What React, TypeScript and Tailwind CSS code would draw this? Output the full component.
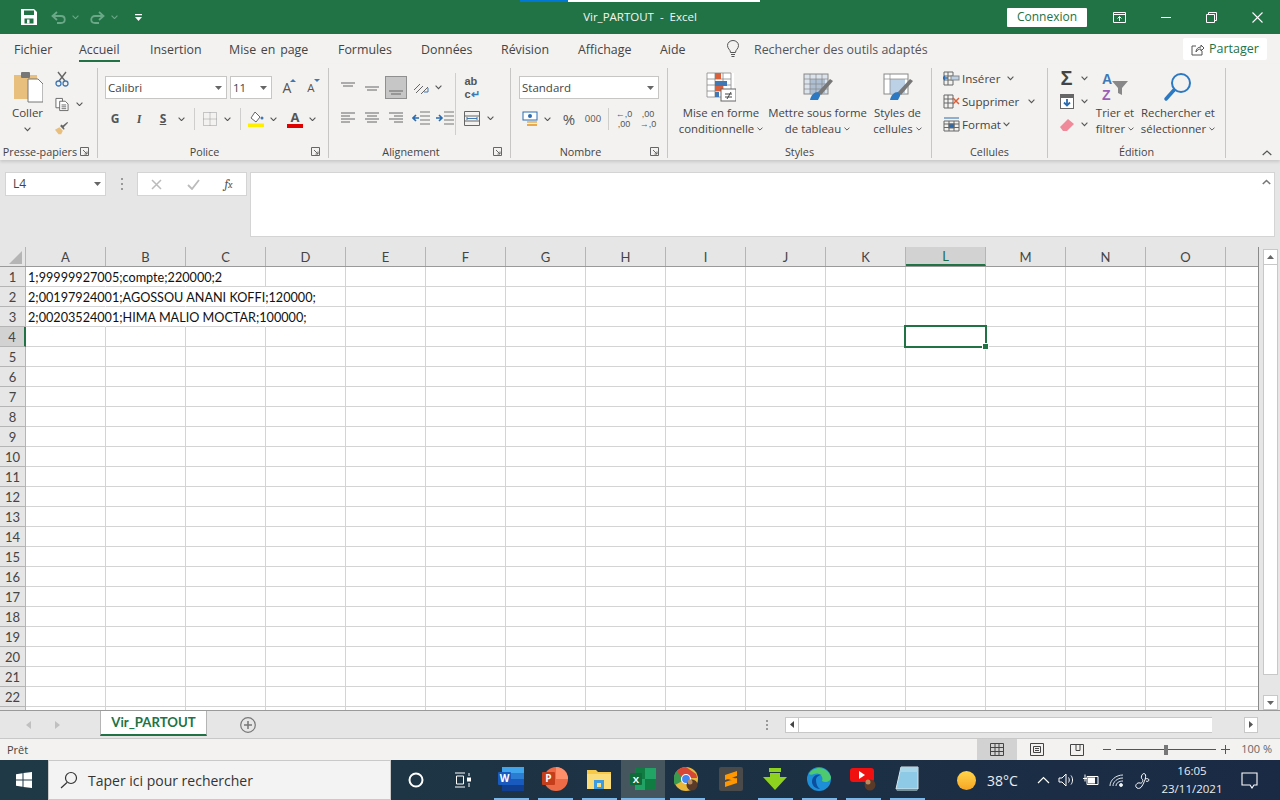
import React from "react";

const Chev = ({ c = "#555", w = 7 }: { c?: string; w?: number }) => (
  <svg width={w} height={w * 0.65} viewBox="0 0 7 4.5" fill="none"><path d="M.6.7 3.5 3.6 6.4.7" stroke={c} strokeWidth="1.1" /></svg>
);
const Caret = () => <svg width="7" height="4" viewBox="0 0 7 4"><path d="M0 0h7L3.5 4z" fill="#666" /></svg>;
const S = ({ w, children, className = "" }: { w: number; children?: React.ReactNode; className?: string }) => (
  <div style={{ width: w }} className={`flex shrink-0 items-center justify-center ${className}`}>{children}</div>
);
const Launcher = () => (
  <svg width="9" height="9" viewBox="0 0 9 9" fill="none" stroke="#666"><path d="M.5 8.5v-8h8v8z" /><path d="M3 3l4 4M7 4.5V7H4.5" /></svg>
);
const VSep = ({ h = 22 }: { h?: number }) => <div style={{ height: h }} className="w-px bg-[#d0cecc]" />;

function Group({ w, label, launcher, children }: { w: number; label: string; launcher?: boolean; children: React.ReactNode }) {
  return (
    <div style={{ width: w }} className="flex h-[90px] shrink-0 flex-col border-r border-[#c8c6c4]">
      <div className="h-[77px] shrink-0">{children}</div>
      <div className="flex h-[13px] shrink-0 items-center text-[10.8px] leading-[13px] text-[#444]">
        <div className="flex-1 text-center whitespace-nowrap">{label}</div>
        {launcher && <div className="flex w-[17px] items-center"><Launcher /></div>}
      </div>
    </div>
  );
}

const Combo = ({ w, text }: { w: number; text: string }) => (
  <div style={{ width: w }} className="flex h-[23px] items-center justify-between border border-[#c8c6c4] bg-white pr-[4px] pl-[2px] text-[11.5px] text-[#444]">
    <span>{text}</span><Caret />
  </div>
);

const Lines = ({ kind }: { kind: "t" | "m" | "b" | "l" | "c" | "r" }) => {
  const v: Record<string, string> = {
    t: "M1 3h14M3 6h10",
    m: "M1 7h14M3 10h10",
    b: "M1 11h14M3 14h10",
    l: "M1 3h14M1 6h9M1 9h14M1 12h9",
    c: "M1 3h14M3 6h10M1 9h14M3 12h10",
    r: "M1 3h14M6 6h9M1 9h14M6 12h9",
  };
  return <svg width="16" height="16" viewBox="0 0 16 16" fill="none" stroke="#666"><path d={v[kind]} /></svg>;
};
const Indent = ({ right }: { right?: boolean }) => (
  <svg width="18" height="14" viewBox="0 0 18 14" fill="none">
    <path d="M8 1h10M8 5h10M8 9h10M8 13h10" stroke="#777" />
    {right ? <path d="M0 7h5M3 4l3 3-3 3" stroke="#2b6cb0" strokeWidth="1.6" /> : <path d="M7 7H2M4 4 1 7l3 3" stroke="#2b6cb0" strokeWidth="1.6" />}
  </svg>
);

function Tabs() {
  const tabs: [string, number][] = [["Fichier", 65], ["Accueil", 71], ["Insertion", 79], ["Mise en page", 109], ["Formules", 83], ["Données", 80], ["Révision", 77], ["Affichage", 82], ["Aide", 64]];
  return (
    <div className="flex h-[30px] shrink-0 items-center bg-[#f3f2f1] pl-[14px] text-[12.4px] text-[#444] [word-spacing:1.5px]">
      {tabs.map(([t, w]) => (
        <div key={t} style={{ width: w }} className="flex h-full shrink-0 items-center whitespace-nowrap">
          <span className="relative flex h-full items-center pt-[2px]">
            {t}
            {t === "Accueil" && <span className="absolute right-0 bottom-[2px] left-0 h-[2px] bg-[#217346]" />}
          </span>
        </div>
      ))}
      <S w={18}>
        <svg width="14" height="18" viewBox="0 0 14 18" fill="none" stroke="#555"><path d="M4.5 12.5C4.5 9.5 1.5 9 1.5 5.5a5.5 5 0 0 1 11 0c0 3.500-3 4-3 7zM5 14.500h4M5.500 16.500h3" /></svg>
      </S>
      <div className="ml-[12px] pt-[2px] whitespace-nowrap text-[#555] [word-spacing:0]">Rechercher des outils adaptés</div>
      <div className="mr-[13px] ml-auto flex h-[22px] w-[84px] items-center justify-center gap-[5px] rounded-[2px] bg-white pt-[1px] text-[12.5px] font-medium text-[#217346]">
        <svg width="13" height="13" viewBox="0 0 13 13" fill="none" stroke="#555"><path d="M5 3H1v9h10V8M5 9c0-3 2-5 5-5V2l3 3-3 3V6c-2 0-4 1-5 3z" /></svg>
        Partager
      </div>
    </div>
  );
}

const PasteIcon = () => (
  <svg width="30" height="32" viewBox="0 0 30 32">
    <rect x="1" y="4" width="23" height="24" fill="#e8bf7c" />
    <rect x="8" y="1" width="9" height="6" rx="1" fill="#777" />
    <path d="M15 11h10l5 5v18H15z" transform="translate(0 -3)" fill="#fff" stroke="#777" />
  </svg>
);

const Clipboard = () => (
  <div className="flex h-full">
    <div className="flex w-[55px] flex-col items-center pt-[3px] text-[11.5px] text-[#444]">
      <PasteIcon />
      <div className="mt-[2px] h-[16px] leading-[16px]">Coller</div>
      <div className="mt-[6px]"><Chev /></div>
    </div>
    <div className="flex flex-col pt-[1px]">
      <S w={14} className="h-[20px]">
        <svg width="14" height="16" viewBox="0 0 14 16" fill="none"><path d="M3 1l7 9M11 1 4 10" stroke="#666" strokeWidth="1.4" /><circle cx="3.500" cy="12.500" r="2.500" stroke="#3f78b5" strokeWidth="1.300" /><circle cx="10.500" cy="12.500" r="2.500" stroke="#3f78b5" strokeWidth="1.300" /></svg>
      </S>
      <div className="mt-[4px] flex h-[22px] items-center">
        <S w={14}>
          <svg width="15" height="15" viewBox="0 0 15 15" fill="#fff" stroke="#666"><path d="M1 1h7v10H1z" /><path d="M5 4h6l3 3v7H5z" /><path d="M7 8h5M7 10h5M7 12h5" /></svg>
        </S>
        <S w={20}><Chev /></S>
      </div>
      <S w={14} className="mt-[2px] h-[22px]">
        <svg width="16" height="14" viewBox="0 0 16 14"><path d="M0 9l5-3 4 4-2 4H4z" fill="#e8bf7c" /><path d="M6 5l4 4 1-1-1-2 5-5-1-1-5 4-2-1z" fill="#666" /></svg>
      </S>
    </div>
  </div>
);

const Police = () => (
  <div className="flex h-full flex-col pt-[8px]">
    <div className="flex h-[23px] items-center pl-[7px]">
      <Combo w={122} text="Calibri" />
      <div className="ml-[3px]"><Combo w={42} text="11" /></div>
      <S w={3} />
      <S w={24}>
        <span className="relative text-[14px] leading-none text-[#555]">A<span className="absolute -top-[2px] -right-[5px] h-0 w-0 border-x-[3px] border-b-[3px] border-x-transparent border-b-[#3f78b5]" /></span>
      </S>
      <S w={24}>
        <span className="relative text-[11.5px] leading-none text-[#555]">A<span className="absolute -top-[3px] -right-[5px] h-0 w-0 border-x-[3px] border-t-[3px] border-x-transparent border-t-[#3f78b5]" /></span>
      </S>
    </div>
    <div className="mt-[9px] flex h-[22px] items-center pl-[5px] text-[12px] font-bold text-[#555]">
      <S w={24}>G</S>
      <S w={24}><span className="font-serif italic">I</span></S>
      <S w={24}><span className="underline">S</span></S>
      <S w={12}><Chev /></S>
      <S w={14}><VSep /></S>
      <S w={17}>
        <svg width="14" height="14" viewBox="0 0 14 14" fill="none" stroke="#999" strokeDasharray="1 1"><path d="M.5.5h13v13H.500zM.5 7h13M7 .5v13" /></svg>
      </S>
      <S w={18}><Chev /></S>
      <S w={8}><VSep /></S>
      <S w={24}>
        <svg width="16" height="16" viewBox="0 0 16 16"><path d="M7 1l5 5-4 5-5-4z" fill="#fff" stroke="#666" /><circle cx="14" cy="7" r="1.500" fill="#3f78b5" /><rect y="12.500" width="16" height="3.500" fill="#ffee00" /></svg>
      </S>
      <S w={10}><Chev /></S>
      <S w={4} />
      <S w={26}>
        <span className="relative flex h-[18px] w-[16px] flex-col items-center text-[13px] leading-[14px] text-[#555]">A<span className="h-[4px] w-[16px] bg-[#e00000]" /></span>
      </S>
      <S w={8}><Chev /></S>
    </div>
  </div>
);

const Alignment = () => (
  <div className="flex h-full pt-[8px]">
    <div className="flex w-[126px] flex-col pl-[7px]">
      <div className="flex h-[23px] items-center">
        <S w={24}><Lines kind="t" /></S>
        <S w={24}><Lines kind="m" /></S>
        <S w={22} className="ml-[1px] h-[23px] border border-[#8f8f8f] bg-[#c6c6c6]"><Lines kind="b" /></S>
        <S w={24} className="ml-[2px]">
          <svg width="18" height="14" viewBox="0 0 18 14" fill="none" stroke="#666"><path d="M2 9l6-6M4 12l7-7M9 13 16 6" /><path d="M12 11h4V7" stroke="#3f78b5" /></svg>
        </S>
        <S w={10}><Chev /></S>
      </div>
      <div className="mt-[8px] flex h-[22px] items-center">
        <S w={24}><Lines kind="l" /></S>
        <S w={24}><Lines kind="c" /></S>
        <S w={24}><Lines kind="r" /></S>
        <S w={25}><Indent /></S>
        <S w={24}><Indent right /></S>
      </div>
    </div>
    <div className="flex flex-col">
      <div className="-mt-[3px] h-[62px] w-px bg-[#d0cecc]" />
    </div>
    <div className="flex flex-col pl-[4px]">
      <div className="flex h-[23px] items-center">
        <S w={24}>
          <span className="flex flex-col items-start font-['Liberation_Sans'] text-[11px] leading-[13px] font-bold text-[#555]">
            <span>ab</span>
            <span>c<span className="text-[#3f78b5]">↵</span></span>
          </span>
        </S>
      </div>
      <div className="mt-[8px] flex h-[22px] items-center">
        <S w={24}>
          <svg width="16" height="15" viewBox="0 0 16 15" fill="none" stroke="#666"><path d="M.5.5h15v14H.500zM.5 5h15M.5 10h15" /><path d="M3 7.500h10M3 6v3M13 6v3" stroke="#3f78b5" /></svg>
        </S>
        <S w={12}><Chev /></S>
      </div>
    </div>
  </div>
);

const Nombre = () => (
  <div className="flex h-full flex-col pt-[8px] pl-[8px]">
    <Combo w={140} text="Standard" />
    <div className="mt-[9px] flex h-[22px] items-center text-[#555]">
      <S w={22}>
        <svg width="17" height="16" viewBox="0 0 17 16"><rect x="1" y="1" width="14" height="8" fill="#fff" stroke="#2b6cb0" /><circle cx="8" cy="5" r="2" fill="#2b6cb0" /><rect x="5" y="10" width="10" height="2" fill="#e8bf7c" /><rect x="5" y="13" width="10" height="2" fill="#e8a84c" /></svg>
      </S>
      <S w={12}><Chev /></S>
      <S w={3} />
      <S w={26}><span className="text-[15px]">%</span></S>
      <S w={22}><span className="text-[9.5px]">000</span></S>
      <S w={8}><VSep /></S>
      <S w={24}><span className="text-center font-['Liberation_Sans'] text-[9px] leading-[10px]"><span className="text-[#2b6cb0]">←</span>,0<br />,00</span></S>
      <S w={24}><span className="text-center font-['Liberation_Sans'] text-[9px] leading-[10px]">,00<br /><span className="text-[#2b6cb0]">→</span>,0</span></S>
    </div>
  </div>
);

const BigBtn = ({ w, icon, l1, l2 }: { w: number; icon: React.ReactNode; l1: string; l2: string }) => (
  <div style={{ width: w }} className="flex shrink-0 flex-col items-center pt-[3px] text-[11.4px] leading-[16px] text-[#444]">
    <div className="flex h-[32px] items-center justify-center">{icon}</div>
    <div className="mt-[2px] whitespace-nowrap">{l1}</div>
    <div className="flex items-center gap-[3px] whitespace-nowrap">{l2}<Chev w={6} /></div>
  </div>
);

const GridLines = () => <path d="M1 1h24v24H1zM1 7h24M1 13h24M1 19h24M9 1v24M17 1v24" fill="none" stroke="#888" strokeWidth="0.8" />;

const CondIcon = () => (
  <svg width="30" height="30" viewBox="0 0 30 30">
    <rect x="1" y="1" width="27" height="24" fill="#fff" />
    <GridLines />
    <rect x="9" y="1" width="6" height="6" fill="#d9603a" />
    <rect x="9" y="9" width="12" height="5" fill="#3f78b5" />
    <rect x="9" y="14" width="8" height="5" fill="#d9603a" />
    <rect x="9" y="20" width="4" height="5" fill="#3f78b5" />
    <rect x="15" y="17" width="15" height="12" fill="#fff" stroke="#666" />
    <path d="M19 22h7M19 25h7M25 20l-4 7" fill="none" stroke="#444" />
  </svg>
);
const TableIcon = ({ light }: { light?: boolean }) => (
  <svg width="30" height="28" viewBox="0 0 30 28">
    <rect x="1" y="1" width="24" height="20" fill={light ? "#fff" : "#dbe3ed"} stroke="#888" />
    <rect x="7" y="6" width="15" height="14" fill={light ? "#bcd0e6" : "#aebfd3"} />
    {!light && <path d="M1 6h24M1 11h24M1 16h24M7 1v20M13 1v20M19 1v20" stroke="#888" strokeWidth="0.7" fill="none" />}
    {light && <path d="M1 6h24M7 1v20" stroke="#888" strokeWidth="0.7" fill="none" />}
    <path d="M7 27c1-5 4-8 8-8 2 0 3 2 2 4l-2 4z" fill="#2b79c2" />
    <path d="M15 19 27 6l3 2-12 14z" fill="#777" />
  </svg>
);

const Styles = () => (
  <div className="flex h-full pl-[8px]">
    <BigBtn w={90} icon={<CondIcon />} l1="Mise en forme" l2="conditionnelle" />
    <BigBtn w={103} icon={<TableIcon />} l1="Mettre sous forme" l2="de tableau" />
    <BigBtn w={57} icon={<TableIcon light />} l1="Styles de" l2="cellules" />
  </div>
);

const CellRow = ({ icon, text, w, cw }: { icon: React.ReactNode; text: string; w: number; cw: number }) => (
  <div className="flex h-[23px] items-center text-[11.6px] text-[#444]">
    <S w={18}>{icon}</S>
    <div style={{ width: w }} className="ml-[2px] whitespace-nowrap">{text}</div>
    <S w={cw}><Chev /></S>
  </div>
);
const Cellules = () => (
  <div className="-mt-[1px] flex h-full flex-col pl-[10px]">
    <CellRow text="Insérer" w={42} cw={12} icon={
      <svg width="17" height="15" viewBox="0 0 17 15" fill="none" stroke="#666"><path d="M1 1h9v13H1zM1 5h9M1 9h9M5 1v13" /><rect x="8" y="5" width="8" height="4" fill="#bcd0e6" stroke="#888" /><path d="M5 7H0M2 5 0 7l2 2" stroke="#2b6cb0" strokeWidth="1.300" /></svg>
    } />
    <CellRow text="Supprimer" w={60} cw={18} icon={
      <svg width="17" height="15" viewBox="0 0 17 15" fill="none" stroke="#666"><path d="M1 1h9v13H1zM1 5h9M1 9h9M5 1v13" /><path d="M10 4l6 6M16 4l-6 6" stroke="#d9603a" strokeWidth="1.500" /></svg>
    } />
    <CellRow text="Format" w={38} cw={12} icon={
      <svg width="17" height="15" viewBox="0 0 17 15" fill="none" stroke="#666"><path d="M1 4h15v10H1zM1 7h15M1 10.500h15M6 4v10M11 4v10" /><rect x="6" y="7" width="5" height="4" fill="#2b6cb0" /><path d="M1 1h15" stroke="#2b6cb0" /></svg>
    } />
  </div>
);

const Edition = () => (
  <div className="flex h-full pl-[8px]">
    <div className="-mt-[1px] flex w-[37px] flex-col">
      <div className="flex h-[23px] items-center">
        <S w={21}><span className="font-['Liberation_Sans'] text-[20px] leading-[23px] font-bold text-[#444]">Σ</span></S><S w={14}><Chev /></S>
      </div>
      <div className="flex h-[23px] items-center">
        <S w={21}>
          <svg width="14" height="15" viewBox="0 0 14 15"><rect width="14" height="15" fill="#666" /><rect x="1" y="4" width="12" height="10" fill="#fff" /><path d="M7 5v6M4 8.500 7 11.500l3-3" stroke="#2b6cb0" strokeWidth="1.800" fill="none" /></svg>
        </S>
        <S w={14}><Chev /></S>
      </div>
      <div className="flex h-[23px] items-center">
        <S w={21}>
          <svg width="14" height="12" viewBox="0 0 14 12"><path d="M0 8l8-8 6 5-7 7H3z" fill="#f08a9a" /></svg>
        </S>
        <S w={14}><Chev /></S>
      </div>
    </div>
    <BigBtn w={44} l1="Trier et" l2="filtrer" icon={
      <div className="flex items-center">
        <span className="flex flex-col font-['Liberation_Sans'] text-[14px] leading-[16px] font-bold"><span className="text-[#3f78b5]">A</span><span className="text-[#9a5fb5]">Z</span></span>
        <svg width="16" height="16" viewBox="0 0 16 16" className="mt-[2px]"><path d="M0 1h16l-6 7v7l-4-2V8z" fill="#888" /></svg>
      </div>
    } />
    <S w={1} />
    <BigBtn w={80} l1="Rechercher et" l2="sélectionner" icon={
      <svg width="30" height="30" viewBox="0 0 30 30" fill="none"><circle cx="18" cy="11" r="9" stroke="#2b79c2" strokeWidth="2" /><path d="M11 18 3 27" stroke="#2b79c2" strokeWidth="3.500" strokeLinecap="round" /></svg>
    } />
  </div>
);

const Ribbon = () => (
  <div className="relative z-10 flex h-[96px] shrink-0 bg-[#f3f2f1] pt-[4px] shadow-[0_2px_3px_rgba(0,0,0,0.13)]">
    <Group w={98} label="Presse-papiers" launcher><Clipboard /></Group>
    <Group w={231} label="Police" launcher><Police /></Group>
    <Group w={182} label="Alignement" launcher><Alignment /></Group>
    <Group w={157} label="Nombre" launcher><Nombre /></Group>
    <Group w={264} label="Styles"><Styles /></Group>
    <Group w={116} label="Cellules"><Cellules /></Group>
    <Group w={178} label="Édition"><Edition /></Group>
    <div className="flex flex-1 items-end justify-end pr-[8px] pb-[4px]">
      <svg width="10" height="6" viewBox="0 0 10 6" fill="none"><path d="M.7 5 5 1l4.300 4" stroke="#555" strokeWidth="1.200" /></svg>
    </div>
  </div>
);

const FormulaBar = () => (
  <div className="flex h-[87px] shrink-0 bg-[#e6e6e6] pt-[12px] pl-[5px]">
    <div className="flex h-[24px] w-[101px] items-center justify-between border border-[#d4d4d4] bg-white pr-[4px] pl-[7px] text-[12px] text-[#444]">L4<Caret /></div>
    <S w={31} className="h-[24px]">
      <div className="flex flex-col gap-[3px]"><i className="block h-[2px] w-[2px] bg-[#999]" /><i className="block h-[2px] w-[2px] bg-[#999]" /><i className="block h-[2px] w-[2px] bg-[#999]" /></div>
    </S>
    <div className="flex h-[24px] w-[110px] items-center border border-[#d4d4d4] bg-white">
      <S w={37}><svg width="11" height="11" viewBox="0 0 11 11" stroke="#bbb" strokeWidth="1.500"><path d="M1 1l9 9M10 1l-9 9" /></svg></S>
      <S w={37}><svg width="13" height="11" viewBox="0 0 13 11" fill="none" stroke="#bbb" strokeWidth="1.800"><path d="M1 6l4 4 7-9" /></svg></S>
      <S w={33}><span className="font-serif text-[13px] text-[#555] italic">f<span className="text-[10px]">x</span></span></S>
    </div>
    <div className="ml-[3px] flex h-[65px] w-[1025px] justify-end border border-[#d4d4d4] bg-white pt-[6px] pr-[3px]">
      <svg width="9" height="6" viewBox="0 0 9 6" fill="none"><path d="M.8 5 4.500 1.500 8.200 5" stroke="#777" strokeWidth="1.600" /></svg>
    </div>
  </div>
);

const COLS = ["A", "B", "C", "D", "E", "F", "G", "H", "I", "J", "K", "L", "M", "N", "O"];
const DATA: Record<number, string> = {
  1: "1;99999927005;compte;220000;2",
  2: "2;00197924001;AGOSSOU ANANI KOFFI;120000;",
  3: "2;00203524001;HIMA MALIO MOCTAR;100000;",
};
const OVERFLOW: Record<number, number> = { 1: 2, 2: 3, 3: 3 };
const ROWS = Array.from({ length: 23 }, (_, i) => i + 1);

const Sheet = () => (
  <div className="flex h-[463px] shrink-0 bg-[#e6e6e6]">
    <div className="flex w-[1259px] shrink-0 flex-col overflow-hidden border-r border-[#8a8a8a]">
      <div className="flex h-[20px] shrink-0 border-b border-[#9a9a9a] font-['Lato'] text-[13px] text-[#444]">
        <div className="flex w-[26px] shrink-0 items-end justify-end border-r border-[#b5b5b5] pr-[3px] pb-[2px]">
          <svg width="13" height="13" viewBox="0 0 13 13"><path d="M13 0v13H0z" fill="#b5b5b5" /></svg>
        </div>
        {COLS.map((c) => (
          <div key={c} className={`flex w-[80px] shrink-0 items-center justify-center border-r border-[#b5b5b5] pt-[2px] ${c === "L" ? "border-b-2 border-b-[#217346] bg-[#d2d2d2] text-[#1f6b43]" : ""}`}>{c}</div>
        ))}
      </div>
      <div className="h-[443px] overflow-hidden">
        {ROWS.map((r) => (
          <div key={r} className="flex h-[20px] shrink-0">
            <div className={`flex w-[26px] shrink-0 items-center justify-center border-b border-[#b5b5b5] pt-[2px] font-['Lato'] text-[13px] text-[#444] ${r === 4 ? "border-r-2 border-r-[#217346] bg-[#d2d2d2] text-[#1f6b43]" : "border-r border-[#9a9a9a]"}`}>{r <= 22 ? r : ""}</div>
            {COLS.map((c, i) => (
              <div key={c} className={`relative w-[80px] shrink-0 border-r border-b border-[#d4d4d4] bg-white ${i < (OVERFLOW[r] ?? 0) ? "border-r-white" : ""}`}>
                {c === "A" && DATA[r] && (
                  <span className="absolute top-[1px] left-[2px] z-[1] font-['Lato'] text-[12.65px] leading-[19px] whitespace-nowrap text-[#111]">{DATA[r]}</span>
                )}
                {c === "L" && r === 4 && (
                  <span className="absolute -top-[2px] -left-[2px] z-[2] h-[23px] w-[83px] border-2 border-[#217346]">
                    <span className="absolute -right-[4px] -bottom-[4px] h-[7px] w-[7px] border border-white bg-[#217346]" />
                  </span>
                )}
              </div>
            ))}
            <div className="w-[32px] shrink-0 border-b border-[#d4d4d4] bg-white" />
          </div>
        ))}
      </div>
    </div>
    <div className="flex flex-1 flex-col pt-[2px] pl-[4px]">
      <div className="flex h-[16px] w-[15px] items-center justify-center border border-[#c8c8c8] bg-white"><svg width="7" height="4" viewBox="0 0 7 4"><path d="M0 4h7L3.500 0z" fill="#666" /></svg></div>
      <div className="h-[410px] w-[15px] border-x border-b border-[#c8c8c8] bg-white" />
      <div className="h-[20px] w-[15px]" />
      <div className="flex h-[15px] w-[15px] items-center justify-center border border-[#c8c8c8] bg-white"><Caret /></div>
    </div>
  </div>
);

const SheetTabs = () => (
  <div className="flex h-[29px] shrink-0 border-t border-b border-t-[#9a9a9a] border-b-[#c8c8c8] bg-[#e6e6e6]">
    <S w={29} className="ml-[14px]"><svg width="5" height="8" viewBox="0 0 5 8"><path d="M5 0v8L0 4z" fill="#c0c0c0" /></svg></S>
    <S w={29}><svg width="5" height="8" viewBox="0 0 5 8"><path d="M0 0v8l5-4z" fill="#c0c0c0" /></svg></S>
    <div className="ml-[28px] flex h-[25px] w-[107px] items-center justify-center border-x border-b-2 border-x-[#b5b5b5] border-b-[#217346] bg-white font-['Lato'] text-[13.2px] font-bold text-[#217346]">Vir_PARTOUT</div>
    <div className="ml-[33px] flex h-[27px] items-center">
      <svg width="16" height="16" viewBox="0 0 16 16" fill="none" stroke="#777"><circle cx="8" cy="8" r="7.300" strokeWidth="1.200" /><path d="M8 4v8M4 8h8" strokeWidth="1.500" /></svg>
    </div>
    <div className="ml-auto flex h-[27px] items-center pr-[22px]">
      <div className="mr-[17px] flex flex-col gap-[2px]"><i className="block h-[2px] w-[2px] bg-[#999]" /><i className="block h-[2px] w-[2px] bg-[#999]" /><i className="block h-[2px] w-[2px] bg-[#999]" /></div>
      <div className="flex h-[16px] w-[14px] items-center justify-center border border-[#c8c8c8] bg-white"><svg width="4" height="7" viewBox="0 0 4 7"><path d="M4 0v7L0 3.500z" fill="#444" /></svg></div>
      <div className="h-[16px] w-[413px] border-y border-[#c8c8c8] bg-white" />
      <div className="h-[16px] w-[32px]" />
      <div className="flex h-[16px] w-[14px] items-center justify-center border border-[#c8c8c8] bg-white"><svg width="4" height="7" viewBox="0 0 4 7"><path d="M0 0v7l4-3.500z" fill="#555" /></svg></div>
    </div>
  </div>
);

const StatusBar = () => (
  <div className="flex h-[21px] shrink-0 items-center bg-[#f3f2f1] pl-[7px] text-[11px] text-[#444]">
    <span className="pt-[1px]">Prêt</span>
    <div className="ml-auto flex h-full items-center">
      <S w={40} className="h-full bg-[#d2d2d2]">
        <svg width="14" height="13" viewBox="0 0 14 13" fill="none" stroke="#444"><path d="M.5.5h13v12H.500zM.5 4.500h13M.5 8.500h13M5 .5v12M9 .5v12" /></svg>
      </S>
      <S w={40}><svg width="14" height="13" viewBox="0 0 14 13" fill="none" stroke="#444"><path d="M.5.5h13v12H.500zM3.500 3.500h7v6h-7zM5 5.500h4M5 7.500h4" /></svg></S>
      <S w={40}><svg width="14" height="12" viewBox="0 0 14 12" fill="none" stroke="#444"><path d="M.5.5h13v11H.500zM6 .5v6h4V.5" /></svg></S>
      <S w={18} className="ml-[1px]"><i className="block h-px w-[8px] bg-[#555]" /></S>
      <div className="relative flex h-full w-[100px] items-center">
        <i className="block h-px w-full bg-[#555]" />
        <i className="absolute left-[48px] h-[10px] w-[4px] bg-[#777]" />
      </div>
      <S w={18}><svg width="9" height="9" viewBox="0 0 9 9" stroke="#555"><path d="M4.500 0v9M0 4.500h9" /></svg></S>
      <div className="w-[46px] pr-[8px] text-right text-[11px] text-[#666]">100 %</div>
    </div>
  </div>
);

const Win = () => (
  <svg width="16" height="16" viewBox="0 0 16 16" fill="#fff"><path d="M0 2.200 6.500 1.300v6.200H0zM7.500 1.100 16 0v7.500H7.500zM0 8.500h6.500v6.200L0 13.800zM7.500 8.500H16V16l-8.500-1.100z" /></svg>
);

const App0 = ({ on, active, children }: { on?: boolean; active?: boolean; children: React.ReactNode }) => (
  <div className={`flex h-full w-[44px] shrink-0 flex-col items-center ${active ? "bg-[#45565f]" : ""}`}>
    <div className="flex flex-1 items-center justify-center">{children}</div>
    <div className={`h-[2px] ${active ? "w-full" : "w-[35px]"} ${on ? "bg-[#76b9ed]" : ""}`} />
  </div>
);

const Avatar = () => <><circle cx="18" cy="18" r="5.500" fill="#5a3a28" /><circle cx="16" cy="15" r="2.500" fill="#b98a60" /></>;

const Taskbar = () => (
  <div className="flex h-[40px] shrink-0 bg-gradient-to-r from-[#1f3a46] via-[#1d3244] to-[#1a2a45] text-white">
    <S w={48}><Win /></S>
    <div className="flex h-full w-[343px] shrink-0 items-center border border-[#c9c9c9] bg-[#f3f3f3] pl-[11px] text-[14px] text-[#333]">
      <svg width="18" height="18" viewBox="0 0 18 18" fill="none" stroke="#333" strokeWidth="1.200"><circle cx="11" cy="7" r="5.500" /><path d="M7 11.500 1 17" /></svg>
      <span className="ml-[10px]">Taper ici pour rechercher</span>
    </div>
    <S w={50}><svg width="16" height="16" viewBox="0 0 16 16" fill="none" stroke="#fff" strokeWidth="2"><circle cx="8" cy="8" r="6.500" /></svg></S>
    <S w={44}><svg width="18" height="16" viewBox="0 0 18 16" fill="none" stroke="#fff"><path d="M1 1h10M1 15h10M2.500 4h7v8h-7zM15 1v3M15 11v4" /><rect x="13.500" y="6" width="3" height="3" fill="#fff" /></svg></S>
    <div className="w-[4px] shrink-0" />
    <App0 on><svg width="26" height="24" viewBox="0 0 26 24"><rect x="4" y="0" width="22" height="6" fill="#41a5ee" /><rect x="4" y="6" width="22" height="6" fill="#2b7cd3" /><rect x="4" y="12" width="22" height="6" fill="#185abd" /><rect x="4" y="18" width="22" height="6" fill="#103f91" /><rect x="0" y="5" width="13" height="13" rx="1" fill="#185abd" /><text x="6.500" y="15" textAnchor="middle" fontSize="10" fontWeight="700" fill="#fff" fontFamily="Open Sans">W</text></svg></App0>
    <App0 on><svg width="26" height="24" viewBox="0 0 26 24"><circle cx="14" cy="12" r="12" fill="#ed6c47" /><path d="M14 0a12 12 0 0 1 12 12H14z" fill="#ff8f6b" /><rect x="0" y="5" width="13" height="13" rx="1" fill="#c43e1c" /><text x="6.500" y="15" textAnchor="middle" fontSize="10" fontWeight="700" fill="#fff" fontFamily="Open Sans">P</text></svg></App0>
    <App0 on><svg width="24" height="20" viewBox="0 0 24 20"><path d="M0 1h9l2 2h13v17H0z" fill="#f7c948" /><path d="M0 5h24v15H0z" fill="#fbdc7a" /><rect x="7" y="11" width="10" height="9" fill="#3f9be0" /><rect x="10" y="14" width="4" height="4" fill="#fbdc7a" /></svg></App0>
    <App0 on active><svg width="26" height="22" viewBox="0 0 26 22"><rect x="5" y="0" width="21" height="22" fill="#21a366" /><rect x="5" y="0" width="10" height="11" fill="#107c41" /><rect x="15" y="11" width="11" height="11" fill="#107c41" /><rect x="0" y="5" width="12" height="12" rx="1" fill="#0f6b3a" /><text x="6" y="14.500" textAnchor="middle" fontSize="9.500" fontWeight="700" fill="#fff" fontFamily="Open Sans">X</text></svg></App0>
    <App0 on><svg width="26" height="24" viewBox="0 0 26 24"><circle cx="12" cy="12" r="12" fill="#e9b83a" /><path d="M12 12 1 18A12 12 0 0 1 4 3z" fill="#3c9a4f" /><path d="M12 0a12 12 0 0 0-9 4l5 7h15a12 12 0 0 0-1-4z" fill="#d64737" /><circle cx="12" cy="12" r="4.500" fill="#4285f4" stroke="#fff" strokeWidth="1.200" /><Avatar /></svg></App0>
    <App0><svg width="24" height="24" viewBox="0 0 24 24"><rect width="24" height="24" rx="2" fill="#4a4a4a" /><path d="M18 4 6 8v5l12-4zM18 11 6 15v5l12-4zM6 11l12 4v-3L6 8z" fill="#ff9800" /></svg></App0>
    <App0 on><svg width="24" height="22" viewBox="0 0 24 22"><path d="M6 0h12v4H6zM7 5h10v4h7L12 22 0 9h7z" fill="#8fd11f" /></svg></App0>
    <App0 on><svg width="24" height="24" viewBox="0 0 24 24"><circle cx="12" cy="12" r="12" fill="#1d8fd8" /><path d="M2 7C6-1 20-2 24 10c0 5-6 6-9 4 2-5-3-9-8-7-2 1-4 1-5 0z" fill="#4ec96f" /><path d="M9 13c0-3 3-5 6-5-6-2-10 2-10 7 0 3 3 7 8 7-3-2-4-6-4-9z" fill="#0c4f9e" /></svg></App0>
    <App0 on><svg width="26" height="24" viewBox="0 0 26 24"><rect x="0" y="1" width="24" height="14" rx="3" fill="#f01010" /><path d="M9 4v8l6-4z" fill="#fff" /><g transform="translate(2 0)"><Avatar /></g></svg></App0>
    <App0 on><svg width="24" height="26" viewBox="0 0 24 26"><path d="M6 1h17v22H1z" fill="#8ecae6" stroke="#d8e6ec" /><path d="M6 1h17v5H5z" fill="#a9d6e8" /><path d="M1 23h22l-1 2H2z" fill="#77909c" /></svg></App0>
    <S w={25} className="ml-[25px]">
      <i className="block h-[19px] w-[19px] rounded-full bg-gradient-to-b from-[#ffd54a] to-[#f5a623]" />
    </S>
    <div className="ml-[8px] flex w-[34px] items-center text-[14px] whitespace-nowrap text-[#e8eef2]">38°C</div>
    <S w={19} className="ml-[13px]"><svg width="13" height="8" viewBox="0 0 13 8" fill="none" stroke="#fff" strokeWidth="1.200"><path d="M1 7l5.500-5.500L12 7" /></svg></S>
    <S w={26}><svg width="16" height="14" viewBox="0 0 16 14" fill="none" stroke="#fff"><path d="M1 5h3l4-4v12L4 9H1zM10.500 4.500c1 1.500 1 3.500 0 5M13 2.500c2 2.500 2 6.500 0 9" /></svg></S>
    <S w={24}><svg width="16" height="12" viewBox="0 0 16 12" fill="none" stroke="#fff"><path d="M4 2.500h11v8H4zM2 .5v4M0 4.500h4M2 4.500v3" /><rect x="5.500" y="4" width="6" height="5" fill="#fff" /></svg></S>
    <S w={26}><svg width="15" height="13" viewBox="0 0 15 13" fill="none" stroke="#dfe6ea"><path d="M1 12C1 6 7 1 14 1M4 12c0-4 4-8 10-8M7 12c0-3 3-5 7-5" /><circle cx="12" cy="11" r="1.500" fill="#fff" /></svg></S>
    <S w={26}><svg width="17" height="17" viewBox="0 0 17 17" fill="none" stroke="#fff"><path d="M3 16c-3-2 0-6 3-5 2 1 4-3 2-4-2-2 1-7 3-5s-1 9-3 12c-1 2-3 3-5 2zM11 7c2-1 4 0 4 1s-2 2-3 1" /></svg></S>
    <div className="ml-[3px] flex w-[68px] shrink-0 flex-col items-center justify-center text-[11.500px] leading-[18px] whitespace-nowrap text-[#e8eef2]">
      <div>16:05</div><div>23/11/2021</div>
    </div>
    <S w={46}><svg width="17" height="17" viewBox="0 0 17 17" fill="none" stroke="#fff" strokeWidth="1.100"><path d="M1 1h15v12h-3l-2 3-2-3H1z" /></svg></S>
    <div className="flex-1" />
  </div>
);

const TitleBar = () => (
  <div className="relative grid h-[34px] shrink-0 grid-cols-[1fr_auto_1fr] items-center bg-[#217346] text-white">
    <span className="absolute top-0 left-[520px] h-[2px] w-[48px] bg-[#0078d4]" />
    <span className="absolute top-0 left-[568px] h-[2px] w-[192px] bg-white" />
    <div className="flex items-center pl-[21px]">
      <svg width="16" height="16" viewBox="0 0 16 16"><path d="M0 0h13l3 3v13H0z" fill="#fff" /><rect x="3" y="1.500" width="10" height="4.500" fill="#217346" /><rect x="3.500" y="9.500" width="9" height="5" fill="#217346" /><rect x="6" y="10.500" width="2.500" height="4" fill="#fff" /></svg>
      <S w={14} />
      <svg width="15" height="13" viewBox="0 0 15 13" fill="none" stroke="#6ba888" strokeWidth="1.800"><path d="M6 1 1.500 5 6 9M2 5h8c5 0 5 7 0 7H6" /></svg>
      <S w={18}><Chev c="#6ba888" /></S>
      <S w={6} />
      <svg width="15" height="13" viewBox="0 0 15 13" fill="none" stroke="#6ba888" strokeWidth="1.800"><path d="M9 1l4.500 4L9 9M13 5H5c-5 0-5 7 0 7h4" /></svg>
      <S w={18}><Chev c="#6ba888" /></S>
      <S w={12} />
      <svg width="7" height="9" viewBox="0 0 7 9" fill="#fff"><path d="M0 1h7v1.200H0zM0 4h7L3.500 8z" /></svg>
    </div>
    <div className="text-[11.5px] whitespace-pre text-[#f3f7f5]">Vir_PARTOUT  -  Excel</div>
    <div className="flex items-center justify-end">
      <div className="flex h-[19px] w-[80px] items-center justify-center rounded-[1px] bg-white text-[12px] text-[#217346]">Connexion</div>
      <S w={24} className="ml-[20px]"><svg width="13" height="12" viewBox="0 0 13 12" fill="none" stroke="#fff"><path d="M.5 1.500h12v10H.500zM.5 3.500h12M6.500 10V5.500M4.500 7.500l2-2 2 2" /></svg></S>
      <S w={23} className="ml-[23px]"><i className="block h-px w-[10px] bg-white" /></S>
      <S w={23} className="ml-[23px]"><svg width="11" height="11" viewBox="0 0 11 11" fill="none" stroke="#fff"><path d="M.5 2.500h8v8h-8zM2.500 2.500v-2h8v8h-2" /></svg></S>
      <S w={23} className="mr-[11px] ml-[23px]"><svg width="11" height="11" viewBox="0 0 11 11" stroke="#fff" strokeWidth="1.100"><path d="M.5.5l10 10M10.500.5l-10 10" /></svg></S>
    </div>
  </div>
);

export default function App() {
  return (
    <div className="flex h-[800px] w-[1280px] flex-col overflow-hidden bg-[#e6e6e6] font-['Open_Sans',sans-serif]">
      <TitleBar />
      <Tabs />
      <Ribbon />
      <FormulaBar />
      <Sheet />
      <SheetTabs />
      <StatusBar />
      <Taskbar />
    </div>
  );
}
